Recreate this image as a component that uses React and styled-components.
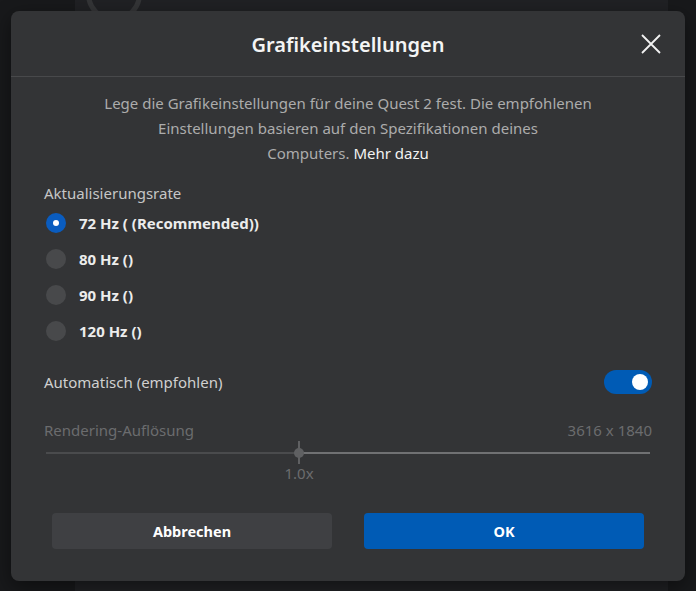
import React from 'react';
import styled, { createGlobalStyle } from 'styled-components';

const GlobalStyle = createGlobalStyle`
  html, body {
    margin: 0;
    padding: 0;
    background: #1c1d1f;
  }
  body {
    font-family: "Noto Sans", "Open Sans", "Liberation Sans", sans-serif;
    -webkit-font-smoothing: antialiased;
  }
`;

const rates = [
  { label: '72 Hz ( (Recommended))', selected: true },
  { label: '80 Hz ()' },
  { label: '90 Hz ()' },
  { label: '120 Hz ()' },
];

export default function App() {
  const value = 0.419;
  return (
    <Page>
      <GlobalStyle />
      <BehindLogo />
      <Modal>
        <Header>
          <span />
          <Title>Grafikeinstellungen</Title>
          <CloseButton aria-label="Schließen">
            <svg width="20" height="20" viewBox="0 0 20 20">
              <path d="M1 1 L19 19 M19 1 L1 19" stroke="#f2f2f2" strokeWidth="1.8" />
            </svg>
          </CloseButton>
        </Header>
        <Body>
          <Description>
            Lege die Grafikeinstellungen für deine Quest 2 fest. Die empfohlenen
            <br />
            Einstellungen basieren auf den Spezifikationen deines
            <br />
            Computers. <MoreLink>Mehr dazu</MoreLink>
          </Description>
          <SectionLabel>Aktualisierungsrate</SectionLabel>
          <RadioList>
            {rates.map((r) => (
              <RadioRow key={r.label}>
                <Radio $selected={r.selected} />
                <RadioLabel>{r.label}</RadioLabel>
              </RadioRow>
            ))}
          </RadioList>
          <ToggleRow>
            <ToggleLabel>Automatisch (empfohlen)</ToggleLabel>
            <Toggle $on>
              <Knob />
            </Toggle>
          </ToggleRow>
          <ResolutionRow>
            <DimText>Rendering-Auflösung</DimText>
            <DimText>3616 x 1840</DimText>
          </ResolutionRow>
          <Slider>
            <TrackFilled style={{ width: `${value * 100}%` }} />
            <TrackRest />
            <Thumb style={{ left: `${value * 100}%` }}>
              <ThumbLabel>1.0x</ThumbLabel>
            </Thumb>
          </Slider>
          <ButtonRow>
            <Button>Abbrechen</Button>
            <Button $primary>OK</Button>
          </ButtonRow>
        </Body>
      </Modal>
    </Page>
  );
}

const Page = styled.div`
  position: relative;
  width: 696px;
  height: 591px;
  overflow: hidden;
  background: linear-gradient(#202124, #202124) 75px 0 / 593px 100% no-repeat, #18191b;
  padding: 11px;
  box-sizing: border-box;
`;

const BehindLogo = styled.div`
  position: absolute;
  left: 86px;
  top: -34px;
  width: 56px;
  height: 56px;
  border-radius: 50%;
  border: 5px solid #343537;
  box-sizing: border-box;
`;

const Modal = styled.div`
  position: relative;
  width: 674px;
  height: 570px;
  background: #333436;
  border-radius: 8px;
  box-shadow: 0 6px 20px rgba(0, 0, 0, 0.45);
  display: flex;
  flex-direction: column;
`;

const Header = styled.div`
  height: 65px;
  display: grid;
  grid-template-columns: 24px 1fr 24px;
  align-items: center;
  padding: 0 22px 0 22px;
  border-bottom: 1px solid #48494b;
`;

const Title = styled.h1`
  margin: 0;
  text-align: center;
  font-size: 20px;
  font-weight: 600;
  color: #f4f4f4;
  padding-top: 1px;
`;

const CloseButton = styled.button`
  background: none;
  border: none;
  padding: 0;
  width: 24px;
  height: 24px;
  display: flex;
  align-items: center;
  justify-content: center;
  cursor: pointer;
  margin-top: 1px;
`;

const Body = styled.div`
  padding: 14px 33px 0;
  display: flex;
  flex-direction: column;
`;

const Description = styled.p`
  margin: 0;
  text-align: center;
  font-size: 15px;
  line-height: 25px;
  color: #acacac;
`;

const MoreLink = styled.a`
  color: #f2f2f2;
  cursor: pointer;
`;

const SectionLabel = styled.div`
  margin-top: 17px;
  font-size: 15px;
  line-height: 20px;
  color: #c6c6c6;
`;

const RadioList = styled.div`
  margin-top: 2px;
  display: flex;
  flex-direction: column;
`;

const RadioRow = styled.label`
  height: 36px;
  display: flex;
  align-items: center;
  gap: 13px;
  padding-left: 2px;
`;

const Radio = styled.span`
  width: 20px;
  height: 20px;
  border-radius: 50%;
  background: ${(p) => (p.$selected ? '#0a5cbf' : '#48494b')};
  display: flex;
  align-items: center;
  justify-content: center;
  &::after {
    content: '';
    width: 6px;
    height: 6px;
    border-radius: 50%;
    background: #ffffff;
    display: ${(p) => (p.$selected ? 'block' : 'none')};
  }
`;

const RadioLabel = styled.span`
  font-size: 15px;
  font-weight: 700;
  color: #ececec;
`;

const ToggleRow = styled.div`
  margin-top: 21px;
  height: 24px;
  display: flex;
  align-items: center;
  justify-content: space-between;
`;

const ToggleLabel = styled.span`
  font-size: 15px;
  color: #d0d0d0;
`;

const Toggle = styled.span`
  width: 48px;
  height: 24px;
  border-radius: 12px;
  background: ${(p) => (p.$on ? '#005bb5' : '#48494b')};
  display: flex;
  align-items: center;
  justify-content: ${(p) => (p.$on ? 'flex-end' : 'flex-start')};
  padding: 0 4px;
  box-sizing: border-box;
`;

const Knob = styled.span`
  width: 16px;
  height: 16px;
  border-radius: 50%;
  background: #ffffff;
`;

const ResolutionRow = styled.div`
  margin-top: 26px;
  height: 20px;
  display: flex;
  align-items: center;
  justify-content: space-between;
`;

const DimText = styled.span`
  font-size: 15px;
  color: #6b6c6e;
`;

const Slider = styled.div`
  position: relative;
  margin: 12px 2px 0;
  height: 2px;
  display: flex;
`;

const TrackFilled = styled.div`
  height: 2px;
  background: #4a4b4d;
`;

const TrackRest = styled.div`
  flex: 1;
  height: 2px;
  background: #707173;
`;

const Thumb = styled.div`
  position: absolute;
  top: 1px;
  width: 10px;
  height: 10px;
  margin-left: -5px;
  margin-top: -5px;
  border-radius: 50%;
  background: #5f6062;
  &::before {
    content: '';
    position: absolute;
    left: 4px;
    top: -7px;
    width: 2px;
    height: 23px;
    background: #5f6062;
  }
`;

const ThumbLabel = styled.span`
  position: absolute;
  top: 15px;
  left: 50%;
  transform: translateX(-50%);
  font-size: 15px;
  color: #6b6c6e;
  white-space: nowrap;
`;

const ButtonRow = styled.div`
  margin-top: 59px;
  padding: 0 8px;
  display: grid;
  grid-template-columns: 1fr 1fr;
  gap: 32px;
`;

const Button = styled.button`
  height: 36px;
  border: none;
  border-radius: 4px;
  background: ${(p) => (p.$primary ? '#005bb5' : '#3f4043')};
  color: #ffffff;
  font-family: inherit;
  font-size: 14.5px;
  font-weight: 700;
  cursor: pointer;
`;
